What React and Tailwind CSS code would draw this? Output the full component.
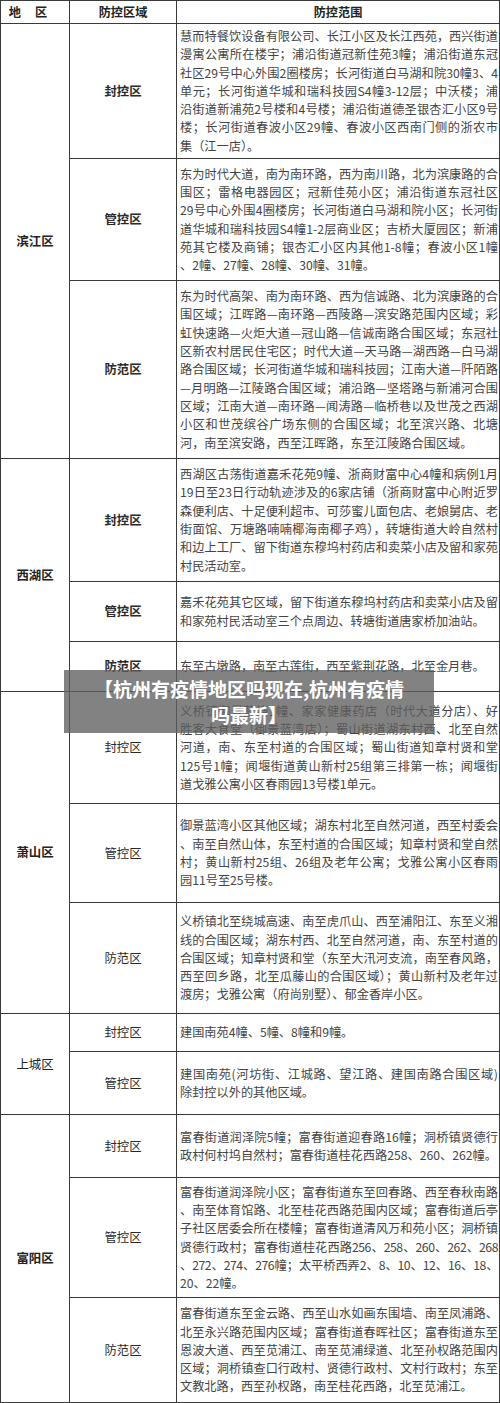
import React from "react";

// zones: [label, height(px), lines[], boldLabel]
const districts = [
  {
    name: "滨江区",
    bold: true,
    rows: [
      {
        zone: "封控区",
        h: 135,
        bold: true,
        lines: [
          "慧而特餐饮设备有限公司、长江小区及长江西苑，西兴街道",
          "漫寓公寓所在楼宇；浦沿街道冠新佳苑3幢；浦沿街道东冠",
          "社区29号中心外围2圈楼房；长河街道白马湖和院30幢3、4",
          "单元；长河街道华城和瑞科技园S4幢3-12层；中沃楼；浦",
          "沿街道新浦苑2号楼和4号楼；浦沿街道德圣银杏汇小区9号",
          "楼；长河街道春波小区29幢、春波小区西南门侧的浙农市",
          "集（江一店）。",
        ],
      },
      {
        zone: "管控区",
        h: 122,
        bold: true,
        lines: [
          "东为时代大道，南为南环路，西为南川路，北为滨康路的合",
          "围区；雷格电器园区；冠新佳苑小区；浦沿街道东冠社区",
          "29号中心外围4圈楼房；长河街道白马湖和院小区；长河街",
          "道华城和瑞科技园S4幢1-2层商业区；吉桥大厦园区；新浦",
          "苑其它楼及商铺；银杏汇小区内其他1-8幢；春波小区1幢",
          "、2幢、27幢、28幢、30幢、31幢。",
        ],
      },
      {
        zone: "防范区",
        h: 178,
        bold: true,
        lines: [
          "东为时代高架、南为南环路、西为信诚路、北为滨康路的合",
          "围区域；江晖路—南环路—西陵路—滨安路范围内区域；彩",
          "虹快速路—火炬大道—冠山路—信诚南路合围区域；东冠社",
          "区新农村居民住宅区；时代大道—天马路—湖西路—白马湖",
          "路合围区域；长河街道华城和瑞科技园；江南大道—阡陌路",
          "—月明路—江陵路合围区域；浦沿路—坚塔路与新浦河合围",
          "区域；江南大道—南环路—闻涛路—临桥巷以及世茂之西湖",
          "小区和世茂缤谷广场东侧的合围区域；北至滨兴路、北塘",
          "河，南至滨安路，西至江晖路，东至江陵路合围区域。",
        ],
      },
    ],
  },
  {
    name: "西湖区",
    bold: true,
    rows: [
      {
        zone: "封控区",
        h: 123,
        bold: true,
        lines: [
          "西湖区古荡街道嘉禾花苑9幢、浙商财富中心4幢和病例1月",
          "19日至23日行动轨迹涉及的6家店铺（浙商财富中心附近罗",
          "森便利店、十足便利超市、可莎蜜儿面包店、老娘舅店、老",
          "街面馆、万塘路喃喃椰海南椰子鸡），转塘街道大岭自然村",
          "和边上工厂、留下街道东穆坞村药店和卖菜小店及留和家苑",
          "村民活动室。",
        ],
      },
      {
        zone: "管控区",
        h: 60,
        bold: true,
        lines: [
          "嘉禾花苑其它区域，留下街道东穆坞村药店和卖菜小店及留",
          "和家苑村民活动室三个点周边、转塘街道唐家桥加油站。",
        ],
      },
      {
        zone: "防范区",
        h: 50,
        bold: true,
        lines: ["东至古墩路，南至古莲街，西至紫荆花路，北至金月巷。"],
      },
    ],
  },
  {
    name: "萧山区",
    bold: true,
    rows: [
      {
        zone: "封控区",
        h: 112,
        lines: [
          "义桥镇御景蓝湾1幢、家家健康药店（时代大道分店）、好",
          "胜客大食堂（御景蓝湾店）；蜀山街道湖东村西、北至自然",
          "河道，南、东至村道的合围区域；蜀山街道知章村贤和堂",
          "125号1幢；闻堰街道黄山新村25组第三排第一栋；闻堰街",
          "道戈雅公寓小区春雨园13号楼1单元。",
        ],
      },
      {
        zone: "管控区",
        h: 99,
        lines: [
          "御景蓝湾小区其他区域；湖东村北至自然河道，西至村委会",
          "、南至自然山体，东至村道的合围区域；知章村贤和堂自然",
          "村；黄山新村25组、26组及老年公寓；戈雅公寓小区春雨",
          "园11号至25号楼。",
        ],
      },
      {
        zone: "防范区",
        h: 111,
        lines: [
          "义桥镇北至绕城高速、南至虎爪山、西至浦阳江、东至义湘",
          "线的合围区域；湖东村西、北至自然河道，南、东至村道的",
          "合围区域；知章村贤和堂（东至大汛河支流，南至春风路，",
          "西至回乡路，北至瓜藤山的合围区域）；黄山新村及老年过",
          "渡房；戈雅公寓（府尚别墅）、郁金香岸小区。",
        ],
      },
    ],
  },
  {
    name: "上城区",
    bold: false,
    rows: [
      { zone: "封控区", h: 38, lines: ["建国南苑4幢、5幢、8幢和9幢。"] },
      {
        zone: "管控区",
        h: 63,
        lines: [
          "建国南苑(河坊街、江城路、望江路、建国南路合围区域)",
          "除封控以外的其他区域。",
        ],
      },
    ],
  },
  {
    name: "富阳区",
    bold: true,
    rows: [
      {
        zone: "封控区",
        h: 63,
        lines: [
          "富春街道润泽院5幢；富春街道迎春路16幢；洞桥镇贤德行",
          "政村何村坞自然村；富春街道桂花西路258、260、262幢。",
        ],
      },
      {
        zone: "管控区",
        h: 120,
        lines: [
          "富春街道润泽院小区；富春街道东至回春路、西至春秋南路",
          "、南至体育馆路、北至桂花西路范围内区域；富春街道后亭",
          "子社区居委会所在楼幢；富春街道清风万和苑小区；洞桥镇",
          "贤德行政村；富春街道桂花西路256、258、260、262、268",
          "、272、274、276幢；太平桥西弄2、8、10、12、16、18、",
          "20、22幢。",
        ],
      },
      {
        zone: "防范区",
        h: 105,
        lines: [
          "富春街道东至金云路、西至山水如画东围墙、南至凤浦路、",
          "北至永兴路范围内区域；富春街道春晖社区；富春街道东至",
          "恩波大道、西至苋浦江、南至苋浦绿道、北至孙权路范围内",
          "区域；洞桥镇查口行政村、贤德行政村、文村行政村；东至",
          "文教北路，西至孙权路，南至桂花西路，北至苋浦江。",
        ],
      },
    ],
  },
];

const cell = "border-[1.5px] border-[#3a3a3a]";

// lines full of digits run a little wide in this font, pull them in
const digitCount = (s) => (s.match(/[0-9]/g) || []).length;

function Lines({ lines }) {
  return (
    <div className="pl-[3px] pr-[1px] text-[12.2px] leading-[18.3px] text-[#444]">
      {lines.map((l, i) => {
        const last = i === lines.length - 1;
        const tight = digitCount(l) >= 10;
        let cls = "whitespace-nowrap";
        if (!last) cls += " text-justify [text-align-last:justify]";
        if (tight) cls += " tracking-[-0.45px]";
        return (
          <div key={i} className={cls}>
            {l}
          </div>
        );
      })}
    </div>
  );
}

export default function App() {
  return (
    <div
      className="relative w-[500px] bg-white"
      style={{ fontFamily: '"Noto Sans CJK SC", "Noto Sans", sans-serif' }}
    >
      <table className="w-[500px] table-fixed border-collapse">
        <colgroup>
          <col className="w-[69px]" />
          <col className="w-[107px]" />
          <col />
        </colgroup>
        <thead>
          <tr className="h-[23px] text-[12.2px] font-bold text-[#222]">
            <th className={cell}>
              <span className="tracking-[14px]">地区</span>
            </th>
            <th className={cell}>防控区域</th>
            <th className={cell}>防控范围</th>
          </tr>
        </thead>
        <tbody>
          {districts.map((d) =>
            d.rows.map((r, i) => (
              <tr key={d.name + r.zone} style={{ height: r.h }}>
                {i === 0 && (
                  <td
                    rowSpan={d.rows.length}
                    className={`${cell} text-center text-[12.4px] text-[#222] ${
                      d.bold ? "font-bold" : "font-normal"
                    }`}
                  >
                    {d.name}
                  </td>
                )}
                <td
                  className={`${cell} text-center text-[12.4px] text-[#2a2a2a] ${
                    r.bold ? "font-bold" : "font-normal"
                  }`}
                >
                  {r.zone}
                </td>
                <td className={`${cell} overflow-hidden`}>
                  <Lines lines={r.lines} />
                </td>
              </tr>
            ))
          )}
        </tbody>
      </table>

      {/* title banner laid over the table */}
      <div className="absolute left-[64px] top-[670px] flex h-[63px] w-[370px] flex-col items-center justify-center bg-[rgba(95,95,95,0.78)] text-center text-[19px] font-bold leading-[26px] text-white">
        <div>【杭州有疫情地区吗现在,杭州有疫情</div>
        <div>吗最新】</div>
      </div>
    </div>
  );
}
